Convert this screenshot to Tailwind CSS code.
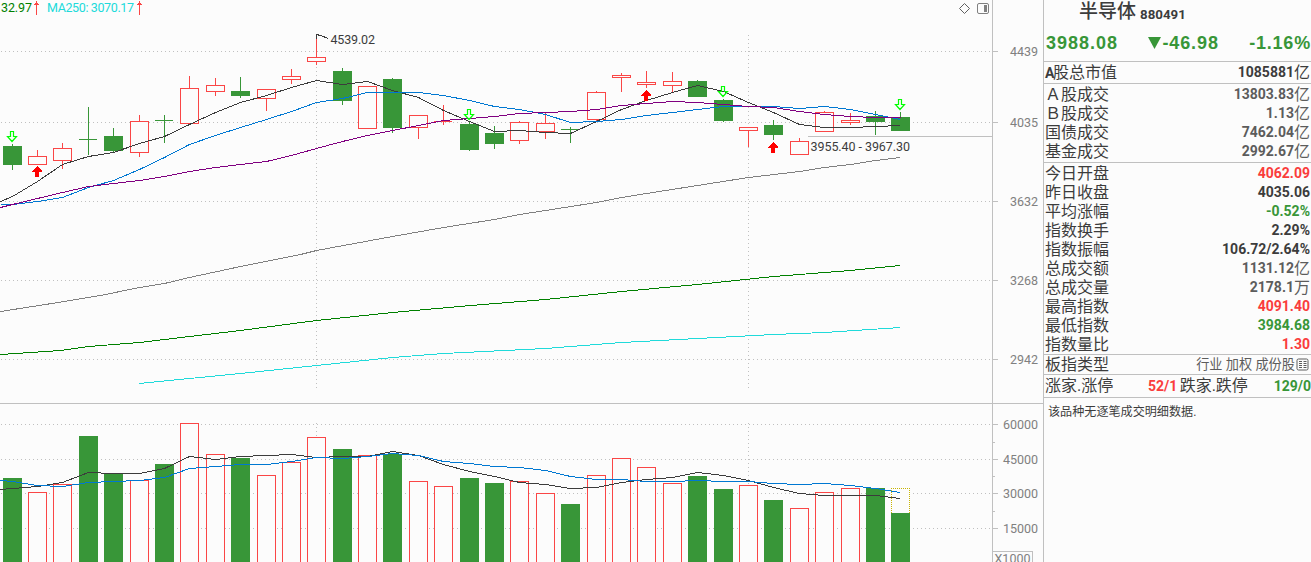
<!DOCTYPE html>
<html lang="zh-CN">
<head>
    <meta charset="UTF-8">
    <meta name="viewport" content="width=device-width, initial-scale=1.0">
    <title>半导体 880491</title>
    <script src="https://cdn.jsdelivr.net/npm/@tailwindcss/browser@4"></script>
</head>
<body class="bg-[#fcfcfc] overflow-hidden">
    <div class="flex w-[1311px] h-[562px] overflow-hidden font-['Roboto','Noto_Sans_CJK_SC',sans-serif] text-[#3c3c3c]">
        <!-- K线图 -->
        <main class="w-[1043px] h-full shrink-0">
            <svg id="chart" class="block font-['Roboto','Noto_Sans_CJK_SC',sans-serif] text-[12.5px]" width="1043" height="562" viewBox="0 0 1043 562"></svg>
        </main>

        <!-- 行情面板 -->
        <aside class="w-[268px] h-full shrink-0 flex flex-col border-l border-[#c0c0c0] whitespace-nowrap">
            <header class="h-[61px] shrink-0">
                <div class="flex items-center h-[26px] pl-[35px]">
                    <span class="text-[19px] leading-[22px] font-medium -mt-0.5">半导体</span>
                    <span class="text-[13.3px] font-bold pl-1 pt-[3px]">880491</span>
                </div>
                <div class="flex justify-between items-center h-[34px] pl-0.5 pr-px text-[#389638] font-bold text-[18px] font-['Liberation_Sans',sans-serif]">
                    <span class="tracking-[1px]">3988.08</span>
                    <span class="flex items-center tracking-[0.9px]"><svg class="mr-px" width="13" height="12"><path d="M0 0H13L6.5 12Z" fill="#389638"/></svg>-46.98</span>
                    <span class="tracking-[0.8px] -mr-px">-1.16%</span>
                </div>
            </header>
            <section class="border-t border-[#c0c0c0] h-[22px] shrink-0" data-rows="0"></section>
            <section class="border-t border-[#c0c0c0] h-[79px] shrink-0 pt-px" data-rows="1"></section>
            <section class="border-t border-[#c0c0c0] h-[192px] shrink-0 pt-px" data-rows="2"></section>
            <section class="border-t border-[#c0c0c0] h-[20px] shrink-0 flex justify-between items-center pl-px pr-0.5 leading-[19px]">
                <span class="text-[16px]">板指类型</span>
                <span class="flex items-center text-[13.2px] text-[#5c5c5c]">行业 加权 成份股
                    <svg class="ml-px" width="13" height="13" fill="none" stroke="#5c5c5c"><rect x="1" y="1" width="11" height="11" rx="1.5"/><path d="M3 3.5H6M3 5.5H6M3 7.5H6M3 9.5H6M7.5 3.5H10.500M7.500 5.500H10.500M7.500 7.500H10.500M7.500 9.500H10.500"/></svg>
                </span>
            </section>
            <section class="border-t border-[#c0c0c0] h-[23px] shrink-0 flex items-center pl-px text-[16px] leading-[20px] pb-px">
                <span class="w-[104px]">涨家.涨停</span>
                <span class="w-[32px] text-[14px] font-bold text-[#fa3c3c]">52/1</span>
                <span class="w-[95px]">跌家.跌停</span>
                <span class="text-[14px] font-bold text-[#389638]">129/0</span>
            </section>
            <section class="border-t border-[#c0c0c0] grow pl-[4px] pt-[5px] text-[12.1px] leading-[18px]">该品种无逐笔成交明细数据.</section>
        </aside>
    </div>

    <script>
        // 行情数据: 名称, 数值, 单位, 颜色
        const DARK = 'text-[#3c3c3c]', GRAY = 'text-[#5c5c5c]', UP = 'text-[#fa3c3c]', DOWN = 'text-[#389638]';
        const groups = [
            [['<b class="text-[14px] inline-block w-2 -tracking-[1px]">A</b>股总市值', '1085881', '亿', DARK]],
            [
                ['Ａ股成交', '13803.83', '亿', GRAY],
                ['Ｂ股成交', '1.13', '亿', GRAY],
                ['国债成交', '7462.04', '亿', GRAY],
                ['基金成交', '2992.67', '亿', GRAY]
            ],
            [
                ['今日开盘', '4062.09', '', UP],
                ['昨日收盘', '4035.06', '', DARK],
                ['平均涨幅', '-0.52%', '', DOWN],
                ['指数换手', '2.29%', '', DARK],
                ['指数振幅', '106.72/2.64%', '', DARK],
                ['总成交额', '1131.12', '亿', GRAY],
                ['总成交量', '2178.1', '万', GRAY],
                ['最高指数', '4091.40', '', UP],
                ['最低指数', '3984.68', '', DOWN],
                ['指数量比', '1.30', '', UP]
            ]
        ];
        document.querySelectorAll('[data-rows]').forEach(el => {
            const rows = groups[el.dataset.rows];
            el.innerHTML = rows.map(r => `
                <div class="flex justify-between items-center pl-px pr-px ${rows.length === 1 ? 'h-[21px]' : 'h-[19px]'} leading-[19px]">
                    <span class="text-[16px]">${r[0]}</span>
                    <span class="flex items-center ${r[3]}"><b class="text-[14px]">${r[1]}</b><span class="text-[16px]">${r[2]}</span></span>
                </div>`).join('');
        });

        // [左, 开收上, 开收下, 最高, 最低, 阳线, 成交量顶]
        const candles = [
            [3,146,165,144,170,0,478],[28,156,165,150,165,1,492],[53,148,161,143,169,1,484],[79,139,140,107,155,0,436],
            [104,136,151,128,152,0,474],[130,121,153,115,157,1,480],[155,120,121,115,143,0,464],[180,88,124,76,124,1,423],
            [206,85,92,78,96,1,454],[231,91,96,77,98,0,458],[257,89,99,89,111,1,475],[282,76,80,69,84,1,462],
            [307,57,62,34,65,1,437],[333,71,101,68,105,0,449],[358,86,129,86,129,1,455],[383,79,128,78,133,0,454],
            [409,115,128,115,139,1,481],[434,121,122,105,125,1,486],[460,124,150,122,151,0,478],[485,133,144,126,149,0,483],
            [510,122,141,121,144,1,481],[536,123,132,112,139,1,493],[561,129,130,127,143,0,504],[587,92,120,91,121,1,475],
            [612,75,78,73,92,1,458],[637,82,85,71,88,1,467],[663,81,86,72,92,1,483],[688,81,97,80,97,0,476],
            [714,100,121,99,122,0,489],[739,127,131,127,147,1,485],[764,125,135,120,140,0,500],[790,141,155,138,155,1,508],
            [815,112,132,111,132,1,492],[841,120,123,113,125,1,488],[866,116,122,111,135,0,488],[891,117,131,112,131,0,513]
        ];
        const ma5 = [196,181,164,156,152,143,136,124,112,102,95,87,80,84,81,90,97,110,121,131,130,132,133,121,109,100,92,85,91,102,112,124,127,127,126,125];
        const ma10 = [204,201,197,187,180,169,157,144,135,127,119,111,102,98,92,92,92,95,100,106,109,114,122,121,119,115,112,109,106,106,106,108,106,109,114,119];
        const ma20 = [204,198,192,186,183,180,176,171,167,164,161,155,148,141,135,130,125,120,118,116,113,112,111,109,105,103,101,102,104,106,107,111,114,116,117,117];
        const vol5 = [488,486,482,472,473,473,468,456,459,456,455,454,457,456,456,451,455,464,471,476,482,484,488,487,482,479,477,472,475,480,487,493,495,495,495,498];
        const vol10 = [481,485,486,482,481,480,477,468,466,464,464,461,457,458,456,453,455,461,463,466,467,470,476,479,479,481,481,480,481,481,483,484,483,485,488,492];
        const ma60 = [[0,311],[45,304],[100,295],[139,287],[164,283],[189,277],[240,266],[300,254],[316,250],[392,236],[443,227],[494,219],[519,214],[545,210],[596,202],[621,197],[646,193],[697,185],[748,177],[799,171],[824,167],[850,164],[875,160],[900,157]];
        const ma120 = [[0,354],[60,350],[88,346],[139,342],[189,336],[240,330],[316,320],[392,312],[470,305],[545,299],[621,291],[697,284],[773,276],[850,270],[900,265]];
        const ma250 = [[139,383],[189,378],[240,373],[316,365],[392,357],[443,353],[545,348],[621,342],[697,338],[773,334],[824,332],[900,327]];

        let s = '';
        const rect = (x, y, w, h, c) => { s += `<rect x="${x}" y="${y}" width="${w}" height="${h}" fill="${c}"/>`; };
        const dots = (x1, y1, x2, y2) => { s += `<path d="M${x1} ${y1}L${x2} ${y2}" stroke="#c0c0c0" stroke-dasharray="1 3"/>`; };
        const poly = (pts, c) => { s += `<polyline points="${pts.map(p => (p[0] + 0.5) + ',' + (p[1] + 0.5)).join(' ')}" fill="none" stroke="${c}"/>`; };
        const series = (first, ys) => [[0, first], ...ys.map((y, i) => [candles[i][0] + 9, y])];
        const text = (x, y, w, str, c) => { s += `<text x="${x}" y="${y}" textLength="${w}" fill="${c}">${str}</text>`; };
        const GREEN = '#389638', RED = '#fa4646', LINE = '#c0c0c0';

        s += '<g shape-rendering="crispEdges">';
        [51, 122, 201, 280, 359, 424, 459, 493, 528].forEach(y => {
            dots(1, y + 0.5, 992, y + 0.5);
            rect(992, y, 6, 1, LINE);
        });
        [316, 748].forEach(x => {
            dots(x + 0.5, 35, x + 0.5, 388);
            dots(x + 0.5, 423, x + 0.5, 562);
        });
        [442, 476, 511].forEach(y => rect(992, y, 3, 1, LINE));
        rect(0, 403, 1043, 1, LINE);
        rect(992, 0, 1, 562, LINE);
        rect(808, 136, 184, 1, LINE);
        rect(993, 551, 39, 1, LINE);
        rect(1032, 551, 1, 11, LINE);

        candles.forEach(([x, t, b, hi, lo, up, v], i) => {
            const c = up ? RED : GREEN;
            rect(x + 9, hi, 1, t - hi, c);
            rect(x + 9, b, 1, lo - b, c);
            if (up && b - t > 1) {
                s += `<rect x="${x + 0.5}" y="${t + 0.5}" width="18" height="${b - t - 1}" fill="#fcfcfc" stroke="${c}"/>`;
            } else {
                rect(x, t, b - t > 1 ? 19 : 18, b - t, c);
            }
            if (up) {
                s += `<rect x="${x + 0.5}" y="${v + 0.5}" width="18" height="150" fill="#fcfcfc" stroke="${c}"/>`;
            } else {
                rect(x, v, 19, 562 - v, c);
            }
        });
        // 预估成交量
        s += '<path d="M891.5 513V488.5H909.5V513" fill="#fcfcfc" stroke="#c8b400" stroke-dasharray="1 1"/>';

        poly(ma60, '#808080');
        poly(ma120, '#008000');
        poly(ma250, '#20dada');
        poly(series(201, ma5), '#3c3c3c');
        poly(series(204, ma10), '#0078d2');
        poly(series(207, ma20), '#800080');
        poly(series(489, vol5), '#3c3c3c');
        poly(series(480, vol10), '#0078d2');

        // 买卖信号
        [[12, 131], [469, 109], [723, 86], [900, 99]].forEach(([x, y]) => {
            s += `<path transform="translate(${x} ${y})" d="M-1.500 .5H1.500V5.500H4.500L0 10.500L-4.500 5.500H-1.500Z" fill="none" stroke="#00ff00" stroke-width="1.2" shape-rendering="auto"/>`;
        });
        [[37, 166], [646, 90], [773, 142]].forEach(([x, y]) => {
            s += `<path transform="translate(${x} ${y})" d="M0 0L5 5V6H2V11H-2V6H-5V5Z" fill="#ff0000"/>`;
        });
        // 最高价指引线
        s += '<path d="M316.500 39V34.500H319M318 35.500H321L328 38.500" fill="none" stroke="#3c3c3c"/>';
        // 指标箭头
        [36, 139].forEach(x => {
            s += `<path d="M${x} 1H${x + 1}V3H${x + 2}V4H${x + 3}V5H${x + 1}V15H${x}V5H${x - 2}V4H${x - 1}V3H${x}Z" fill="${RED}"/>`;
        });
        s += '</g>';

        // 右上角按钮
        s += '<path d="M964.500 3.500L969.500 8.500L964.500 13.500L959.500 8.500Z" fill="none" stroke="#606060"/>';
        s += '<rect x="977.500" y="3.500" width="11" height="10" rx="1.500" fill="none" stroke="#808080"/>';
        rect(984, 5, 3, 7, '#808080');

        text(1, 12, 31, '32.97', '#008000');
        text(47, 12, 87, 'MA250: 3070.17', '#20dada');
        text(330.500, 44, 44.500, '4539.02', '#3c3c3c');
        text(810.500, 151, 99.500, '3955.40 - 3967.30', '#3c3c3c');
        [[4439, 51], [4035, 122], [3632, 201], [3268, 280], [2942, 359]].forEach(([n, y]) => text(1010, y + 5, 28, n, '#808080'));
        [[60000, 424], [45000, 459], [30000, 493], [15000, 528]].forEach(([n, y]) => text(1003, y + 5, 35, n, '#808080'));
        text(994.500, 562.500, 36, 'X1000', '#808080');

        document.getElementById('chart').innerHTML = s;
    </script>
</body>
</html>
